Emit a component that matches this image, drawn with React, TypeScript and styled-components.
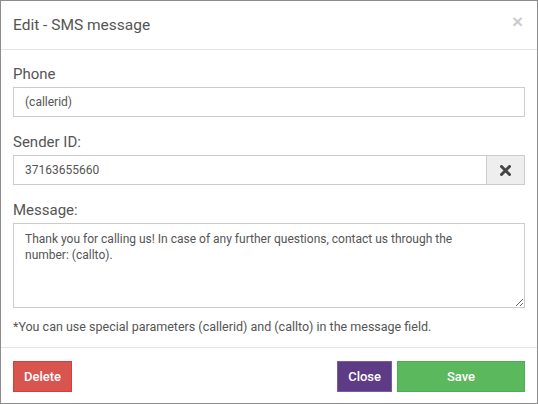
import React from "react"
import styled, { createGlobalStyle } from "styled-components"

const GlobalStyle = createGlobalStyle`
  html, body {
    margin: 0;
    padding: 0;
    background: #fff;
  }
  * {
    box-sizing: border-box;
  }
`

const Modal = styled.div`
  width: 538px;
  height: 404px;
  border: 1px solid #8c8c8c;
  background: #fff;
  display: flex;
  flex-direction: column;
  font-family: Roboto, "Liberation Sans", sans-serif;
  color: #555;
`

const Header = styled.div`
  display: flex;
  align-items: center;
  justify-content: space-between;
  height: 49px;
  padding: 0 12px;
  border-bottom: 1px solid #e5e5e5;
`

const Title = styled.h4`
  margin: 0;
  font-size: 15.5px;
  font-weight: 400;
  line-height: 20px;
  color: #555;
`

const CloseX = styled.button`
  border: 0;
  background: none;
  padding: 0;
  margin-top: -7px;
  margin-right: 2px;
  font-family: "Liberation Sans", Arial, sans-serif;
  font-size: 19px;
  font-weight: 700;
  line-height: 1;
  color: #000;
  opacity: 0.2;
  cursor: pointer;
`

const Body = styled.div`
  flex: 1;
  padding: 14px 12px 0;
`

const Group = styled.div`
  margin-bottom: 15px;
`

const Label = styled.label`
  display: block;
  font-size: 15px;
  line-height: 20px;
  margin-bottom: 3px;
  color: #555;
`

const TextInput = styled.input`
  display: block;
  width: 100%;
  height: 30px;
  padding: 0 11px;
  border: 1px solid #ccc;
  border-radius: 0;
  font-family: Roboto, "Liberation Sans", sans-serif;
  font-size: 12px;
  color: #555;
  outline: none;
`

const InputGroup = styled.div`
  display: flex;
`

const GroupInput = styled(TextInput)`
  flex: 1;
  width: auto;
`

const AddonButton = styled.button`
  width: 38px;
  height: 30px;
  border: 1px solid #ccc;
  border-left: 0;
  background: #eee;
  display: flex;
  align-items: center;
  justify-content: center;
  padding: 0;
  cursor: pointer;
`

const MessageArea = styled.textarea`
  display: block;
  width: 100%;
  height: 85px;
  padding: 7px 36px 7px 11px;
  border: 1px solid #ccc;
  border-radius: 0;
  font-family: Roboto, "Liberation Sans", sans-serif;
  font-size: 12px;
  line-height: 16px;
  color: #555;
  resize: vertical;
  outline: none;
`

const Note = styled.p`
  margin: 10px 0 0;
  font-size: 12.5px;
  line-height: 17px;
  color: #555;
`

const Footer = styled.div`
  display: flex;
  align-items: center;
  gap: 5px;
  padding: 13px 12px 11px;
  border-top: 1px solid #e5e5e5;
`

const Spacer = styled.div`
  flex: 1;
`

const Button = styled.button<{ $bg: string; $border: string; $width?: number }>`
  height: 31px;
  padding: 0 10px;
  width: ${p => (p.$width ? `${p.$width}px` : "auto")};
  background: ${p => p.$bg};
  border: 1px solid ${p => p.$border};
  border-radius: 0;
  color: #fff;
  font-family: Roboto, "Liberation Sans", sans-serif;
  font-size: 13px;
  font-weight: 500;
  cursor: pointer;
`

const TimesIcon = () => (
  <svg width="11" height="11" viewBox="0 0 11 11">
    <path
      d="M1.5 1.5 L9.5 9.5 M9.5 1.5 L1.5 9.5"
      stroke="#444"
      strokeWidth="3"
      strokeLinecap="round"
    />
  </svg>
)

export default function App() {
  return (
    <>
      <GlobalStyle />
      <Modal>
        <Header>
          <Title>Edit - SMS message</Title>
          <CloseX aria-label="close">×</CloseX>
        </Header>
        <Body>
          <Group>
            <Label>Phone</Label>
            <TextInput defaultValue="(callerid)" />
          </Group>
          <Group>
            <Label>Sender ID:</Label>
            <InputGroup>
              <GroupInput defaultValue="37163655660" />
              <AddonButton>
                <TimesIcon />
              </AddonButton>
            </InputGroup>
          </Group>
          <Label>Message:</Label>
          <MessageArea defaultValue="Thank you for calling us! In case of any further questions, contact us through the number: (callto)." />
          <Note>
            *You can use special parameters (callerid) and (callto) in the
            message field.
          </Note>
        </Body>
        <Footer>
          <Button $bg="#d9534f" $border="#d43f3a">
            Delete
          </Button>
          <Spacer />
          <Button $bg="#5e3b85" $border="#7a5aa0">
            Close
          </Button>
          <Button $bg="#5cb85c" $border="#4cae4c" $width={128}>
            Save
          </Button>
        </Footer>
      </Modal>
    </>
  )
}
